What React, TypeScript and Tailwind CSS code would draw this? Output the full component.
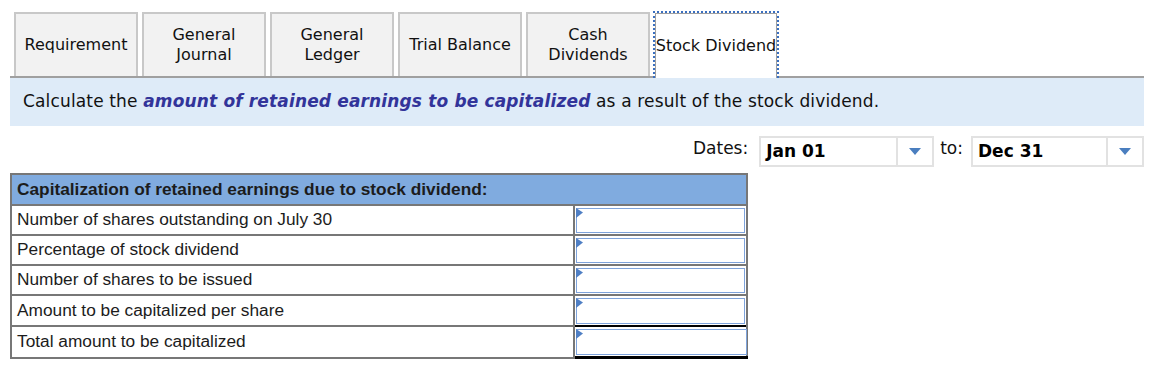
import React from 'react';

const tabs = [
  { label: ['Requirement'] },
  { label: ['General', 'Journal'] },
  { label: ['General', 'Ledger'] },
  { label: ['Trial Balance'] },
  { label: ['Cash', 'Dividends'] },
  { label: ['Stock Dividend'], active: true },
];

const rows = [
  { label: 'Number of shares outstanding on July 30' },
  { label: 'Percentage of stock dividend' },
  { label: 'Number of shares to be issued' },
  { label: 'Amount to be capitalized per share', line: 'single' },
  { label: 'Total amount to be capitalized', line: 'double' },
];

function Arrow() {
  return (
    <svg width="12" height="7" viewBox="0 0 12 7">
      <polygon points="0,0 12,0 6,7" fill="#4a7ebf" />
    </svg>
  );
}

function DateSelect({ value, width }: { value: string; width: string }) {
  return (
    <div className={`flex h-[31px] ${width} border-2 border-[#e2e2e2] bg-white`}>
      <div className="flex flex-1 items-center pl-[5px] pt-[1px] text-[17px] font-bold text-black">{value}</div>
      <div className="flex w-[36px] items-center justify-center border-l-2 border-[#e2e2e2]">
        <Arrow />
      </div>
    </div>
  );
}

export default function App() {
  return (
    <div className="w-[1154px] h-[368px] bg-white px-[10px] pt-[12px]" style={{ fontFamily: '"DejaVu Sans", Verdana, sans-serif' }}>
      <div className="flex gap-[4px] border-b-2 border-[#a0a0a0] pl-[4px] h-[66px]">
        {tabs.map((t, i) =>
          t.active ? (
            <div key={i} className="-mt-[1px] -mb-[2px] ml-[-1px] w-[126px] h-[67px] border-2 border-b-0 border-dotted border-[#3a6fc0]">
              <div className="flex h-full w-full flex-col items-center justify-center whitespace-nowrap border-[1.5px] border-b-0 border-[#a0a0a0] bg-white text-[16px] leading-[20px] text-[#111]">
                {t.label.map((l) => (
                  <span key={l}>{l}</span>
                ))}
              </div>
            </div>
          ) : (
            <div key={i} className="flex w-[124px] h-[64px] flex-col items-center justify-center whitespace-nowrap border-2 border-b-0 border-[#c8c8c8] bg-[#f2f2f2] text-[16px] leading-[20px] text-[#111]">
              {t.label.map((l) => (
                <span key={l}>{l}</span>
              ))}
            </div>
          )
        )}
      </div>

      <div className="flex h-[48px] items-center bg-[#deebf8] pl-[13px] text-[17px] tracking-[0.15px] text-[#111]">
        <span>
          Calculate the{' '}
          <b className="italic text-[#32349a]">amount of retained earnings to be capitalized</b> as a result of the
          stock dividend.
        </span>
      </div>

      <div className="mt-[10px] flex justify-end gap-[8px] text-[17px] text-[#111]">
        <span className="mr-[3px]">Dates:</span>
        <DateSelect value="Jan 01" width="w-[175px]" />
        <span className="ml-[-2px]">to:</span>
        <DateSelect value="Dec 31" width="w-[173px]" />
      </div>

      <div className="mt-[6px] w-[738px] border-2 border-[#777] text-[17.3px] text-[#1c1c1c]" style={{ fontFamily: '"Liberation Sans", Arial, sans-serif' }}>
        <div className="flex h-[31px] items-center border-b-2 border-[#777] bg-[#80abdf] pl-[5px] font-bold">
          Capitalization of retained earnings due to stock dividend:
        </div>
        {rows.map((r, i) => {
          const last = i === rows.length - 1;
          const rightBorder =
            r.line === 'single'
              ? 'border-b-2 border-black'
              : r.line === 'double'
                ? 'border-b-[3px] border-black -mb-[2px] -mr-[2px]'
                : 'border-b-2 border-[#777]';
          return (
            <div key={i} className={`flex ${r.line === 'single' ? 'h-[31px]' : 'h-[30px]'}`}>
              <div className={`flex w-[563px] items-center border-r-2 border-[#777] pl-[5px] ${last ? '' : 'border-b-2'}`}>{r.label}</div>
              <div className={`relative flex-1 px-[1px] pt-[2px] pb-[1px] ${rightBorder}`}>
                <div className="h-full w-full border border-[#7ea3db] bg-white" />
                <svg className="absolute left-[1px] top-[2px]" width="7" height="11" viewBox="0 0 7 11">
                  <polygon points="0,0 7,4.5 0,10" fill="#4f7fc4" />
                </svg>
              </div>
            </div>
          );
        })}
      </div>
    </div>
  );
}
